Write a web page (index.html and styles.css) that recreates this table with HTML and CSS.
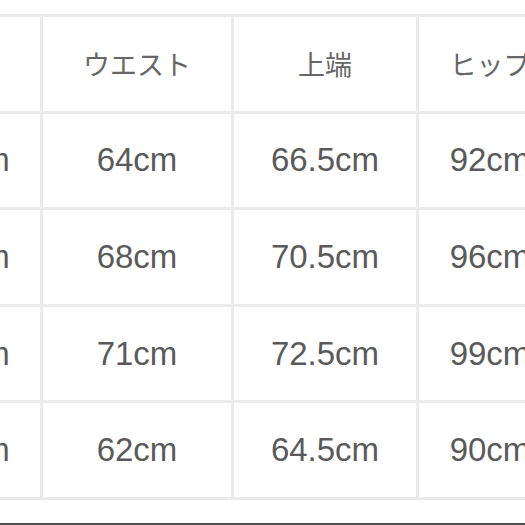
FILE: index.html
```html
<!DOCTYPE html>
<html lang="ja">
<head>
<meta charset="utf-8">
<link rel="stylesheet" href="styles.css">
</head>
<body>
<div class="frame">
  <div class="viewport">
    <table class="sizes">
      <colgroup>
        <col class="c0"><col class="c1"><col class="c2"><col class="c3">
      </colgroup>
      <thead>
        <tr><th>サイズ</th><th>ウエスト</th><th>上端</th><th>ヒップ</th></tr>
      </thead>
      <tbody>
        <tr><td>100.5cm</td><td>64cm</td><td>66.5cm</td><td>92cm</td></tr>
        <tr><td>100.5cm</td><td>68cm</td><td>70.5cm</td><td>96cm</td></tr>
        <tr><td>100.5cm</td><td>71cm</td><td>72.5cm</td><td>99cm</td></tr>
        <tr><td>100.5cm</td><td>62cm</td><td>64.5cm</td><td>90cm</td></tr>
      </tbody>
    </table>
  </div>
  <div class="edge"></div>
</div>
</body>
</html>
```
FILE: styles.css
```css
html, body {
  margin: 0;
  padding: 0;
  background: #ffffff;
}
.frame {
  width: 525px;
  height: 525px;
  display: flex;
  flex-direction: column;
  overflow: hidden;
}
.viewport {
  flex: 1;
  overflow: hidden;
  padding-top: 14px;
}
.edge {
  height: 2px;
  flex: none;
  background: #4e4e4e;
}
.sizes {
  border-collapse: collapse;
  table-layout: fixed;
  margin-left: -150px;
  width: 711px;
}
.c0 { width: 190px; }
.c1 { width: 191px; }
.c2 { width: 185px; }
.c3 { width: 145px; }
.sizes th,
.sizes td {
  border: 3px solid #ebebeb;
  text-align: center;
  vertical-align: middle;
  padding: 0;
  white-space: nowrap;
  height: 93.6px;
}
.sizes th {
  font-family: "Noto Sans CJK JP", "Liberation Sans", sans-serif;
  font-weight: normal;
  font-size: 27px;
  color: #666666;
}
.sizes td {
  font-family: "Liberation Sans", "Noto Sans CJK JP", sans-serif;
  font-size: 33px;
  color: #5a5a5a;
}
```
